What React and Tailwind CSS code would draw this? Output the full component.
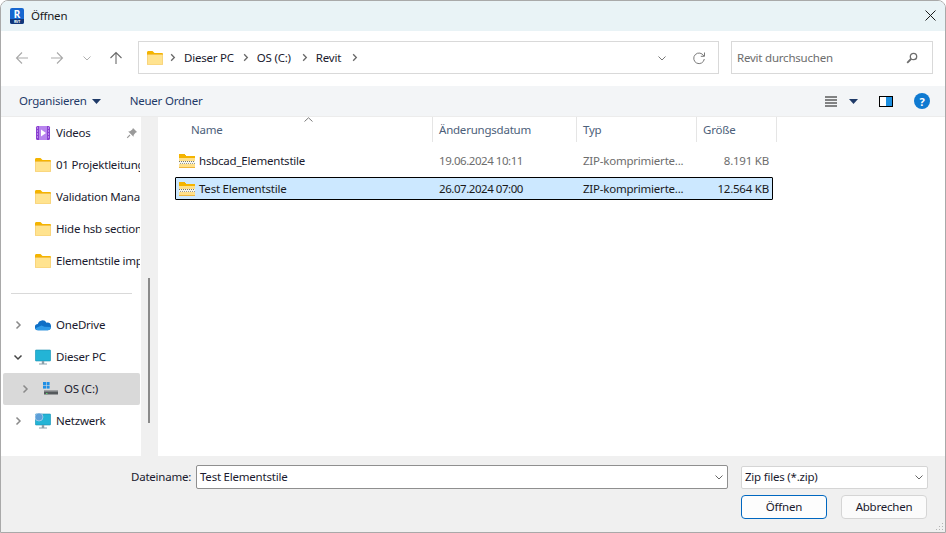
import React from "react";

const Folder = ({ className = "" }) => (
  <svg width="16" height="14" viewBox="1 1 16 14" className={`shrink-0 ${className}`}>
    <path d="M1 2.5C1 1.7 1.6 1 2.4 1H6.5L8.5 3H16a1 1 0 0 1 1 1v1H1z" fill="#f4b400" />
    <path d="M1.3 4.5h15.4V14a.8.8 0 0 1-.8.8H2.1a.8.8 0 0 1-.8-.8z" fill="#ffe38f" stroke="#f1bc45" strokeWidth="0.6" />
  </svg>
);

const ZipFolder = () => (
  <svg width="16" height="14" viewBox="1 1 16 14" className="shrink-0" shapeRendering="crispEdges">
    <path d="M1 2.5C1 1.7 1.6 1 2.4 1H6.5L8.5 3H16a1 1 0 0 1 1 1v1H1z" fill="#f4b400" />
    <path d="M1 5h16v10H1z" fill="#ffe08a" />
    <path d="M1 14.5h16" stroke="#efb63c" strokeWidth="1" />
    <rect x="1" y="8" width="16" height="3" fill="#f6f6ee" />
    <path d="M1 8.5h16" stroke="#77776c" strokeWidth="1" strokeDasharray="1 1" />
    <path d="M2 10.5h15" stroke="#9a9a8d" strokeWidth="1" strokeDasharray="1 1" />
  </svg>
);

const Chev = ({ dir = "right", color = "#8a8a8a", size = 10, w = 1.5 }) => {
  const d = {
    right: "M3.5 1.5 7 5 3.5 8.5",
    down: "M1.5 3.5 5 7 8.5 3.5",
  }[dir];
  return (
    <svg width={size} height={size} viewBox="0 0 10 10" className="shrink-0">
      <path d={d} fill="none" stroke={color} strokeWidth={w} />
    </svg>
  );
};

const Caret = () => (
  <svg width="9" height="5" viewBox="0 0 9 5" className="shrink-0">
    <path d="M0 0h9L4.5 5z" fill="#1f3a68" />
  </svg>
);

const Arrow = ({ rotate = "", color }) => (
  <svg width="14" height="14" viewBox="0 0 14 14" className={rotate}>
    <path d="M13 7H1.5M7 1.5 1.5 7 7 12.5" fill="none" stroke={color} strokeWidth="1.1" />
  </svg>
);

const Videos = () => (
  <svg width="16" height="16" viewBox="0 0 16 16" className="shrink-0">
    <rect x="1" y="1" width="14" height="14" rx="1.5" fill="#8a3fd1" />
    <rect x="4" y="1" width="8" height="14" fill="#b884ee" />
    <path d="M6 4.5 11 8l-5 3.5z" fill="#fff" />
    <path d="M2 3h1M2 6h1M2 9h1M2 12h1M13 3h1M13 6h1M13 9h1M13 12h1" stroke="#e7d4fa" strokeWidth="1" />
  </svg>
);

const Cloud = () => (
  <svg width="16" height="12" viewBox="0.7 1 16.6 12" className="shrink-0">
    <path d="M4 12.5a3.3 3.3 0 0 1-.4-6.6A5 5 0 0 1 12.7 4.6 3.4 3.4 0 0 1 14 12.5z" fill="#0f6fc6" />
    <path d="M1 10.5 7.5 7.5l3 1.2 6.6.5a3.2 3.2 0 0 1-3.1 3.3H4a3 3 0 0 1-3-2z" fill="#2f9be8" />
  </svg>
);

const Pc = ({ globe }) => (
  <svg width="16" height="16" viewBox="1 1 16 16" className="shrink-0">
    <rect x="1.3" y="2" width="15.4" height="11" rx="0.8" fill="#23b4d6" stroke="#1b8fb0" strokeWidth="0.6" />
    <rect x="7.8" y="13" width="2.4" height="3" fill="#8aa0ab" />
    <rect x="5" y="15.5" width="8" height="1" fill="#8aa0ab" />
    {globe && <circle cx="5" cy="5" r="4" fill="#5d9fd8" stroke="#c7dff2" strokeWidth="0.6" />}
  </svg>
);

const Drive = () => (
  <svg width="16" height="16" viewBox="0 0 16 16" className="shrink-0">
    <rect x="0" y="1" width="3" height="3" fill="#1f8fe5" />
    <rect x="3.6" y="1" width="3" height="3" fill="#1f8fe5" />
    <rect x="0" y="4.6" width="3" height="3" fill="#1f8fe5" />
    <rect x="3.6" y="4.6" width="3" height="3" fill="#1f8fe5" />
    <path d="M1 9.5h14v4H1z" fill="#55595c" />
    <path d="M1 9.5h14v1H1z" fill="#a6a9ab" />
    <rect x="3" y="12" width="1.5" height="1" fill="#59d66d" />
  </svg>
);

const Pin = () => (
  <svg width="12" height="12" viewBox="0 0 12 12">
    <path d="M7 1 11 5 9.5 5.7 7.7 8 7.5 9.8 2.2 4.5 4 4.3 6.3 2.5z" fill="#9a9a9a" />
    <path d="M4 8 1.2 10.8" stroke="#9a9a9a" strokeWidth="1.1" />
  </svg>
);

const NavRow = ({ icon, label, tree, selected, indent, trail }) => (
  <div className={`h-8 flex items-center shrink-0 rounded-[2px] ml-[2px] mr-px ${selected ? "bg-[#d9d9d9]" : ""}`}>
    <div className={`shrink-0 flex ${indent ? "w-[40px] pl-[17px]" : "w-[32px] pl-[10px]"}`}>{tree}</div>
    <div className="w-[21px] shrink-0 flex items-center">{icon}</div>
    <span className="flex-1 min-w-0 block whitespace-nowrap overflow-hidden leading-[16px]">{label}</span>
    {trail && <div className="mr-[2px] shrink-0">{trail}</div>}
  </div>
);

const HeadCell = ({ w, children }) => (
  <div className={`h-full shrink-0 flex items-center border-r border-[#e5e5e5] pl-[6px] ${w}`}>{children}</div>
);

const FileRow = ({ name, date, size, selected }) => (
  <div className={`h-[23px] w-[598px] flex items-center border box-border rounded-[1px] ${selected ? "bg-[#cce8ff] border-black text-[#1a1a1a]" : "border-transparent text-[#6d6d6d]"}`}>
    <div className="w-[20px] ml-[3px] shrink-0 flex"><ZipFolder /></div>
    <div className={`w-[240px] shrink-0 whitespace-nowrap ${selected ? "" : "text-[#1a1a2e]"}`}>{name}</div>
    <div className="w-[144px] shrink-0 whitespace-nowrap tracking-[-0.45px]">{date}</div>
    <div className="w-[120px] shrink-0 whitespace-nowrap">ZIP-komprimierte...</div>
    <div className="w-[66px] text-right shrink-0 whitespace-nowrap">{size}</div>
  </div>
);

export default function App() {
  return (
    <div
      className="w-[946px] h-[533px] flex flex-col overflow-hidden bg-white border border-[#a9a9a9] rounded-t-[8px] text-[11.5px] leading-none text-[#1a1a2e] tracking-[-0.22px]"
      style={{ fontFamily: '"Noto Sans", sans-serif' }}
    >
      {/* Title bar */}
      <div className="h-[30px] shrink-0 flex items-center bg-[#e9f3f6] pb-px">
        <svg width="14" height="16" viewBox="0 0 14 16" className="ml-[9px] shrink-0">
          <rect width="14" height="16" rx="2" fill="#1767d0" />
          <path d="M0 11h14v3a2 2 0 0 1-2 2H2a2 2 0 0 1-2-2z" fill="#12377a" />
          <text x="7" y="9.5" textAnchor="middle" fontSize="10" fontWeight="700" fill="#ffffff">R</text>
          <text x="7" y="15" textAnchor="middle" fontSize="3.5" fontWeight="700" fill="#ffffff">RVT</text>
        </svg>
        <span className="ml-[7px] text-[#1a1a1a]">Öffnen</span>
        <button className="ml-auto mr-[9px] w-[11px] h-[11px] flex">
          <svg width="11" height="11" viewBox="0 0 11 11">
            <path d="M.5.5 10.5 10.5M10.5.5 .5 10.5" stroke="#1a1a1a" strokeWidth="1" />
          </svg>
        </button>
      </div>

      {/* Navigation row */}
      <div className="h-[55px] shrink-0 flex items-center bg-white pb-[2px]">
        <div className="ml-[14px] w-[123px] shrink-0 flex items-center">
          <Arrow color="#a9a9a9" />
          <div className="ml-[21px] flex"><Arrow rotate="rotate-180" color="#a9a9a9" /></div>
          <div className="ml-[18px] flex"><Chev dir="down" color="#b0b0b0" w={1} /></div>
          <div className="ml-[17px] flex"><Arrow rotate="rotate-90" color="#6a6a6a" /></div>
        </div>
        <div className="w-[581px] h-[33px] shrink-0 flex items-center border border-[#d9d9d9] bg-white">
          <Folder className="ml-[8px]" />
          <div className="ml-[5px] flex"><Chev color="#6a6a6a" size={9} /></div>
          <span className="ml-[7px]">Dieser PC</span>
          <div className="ml-[7px] flex"><Chev color="#6a6a6a" size={9} /></div>
          <span className="ml-[7px]">OS (C:)</span>
          <div className="ml-[9px] flex"><Chev color="#6a6a6a" size={9} /></div>
          <span className="ml-[7px]">Revit</span>
          <div className="ml-[9px] flex"><Chev color="#6a6a6a" size={9} /></div>
          <div className="ml-auto flex"><Chev dir="down" color="#777777" w={1} /></div>
          <div className="ml-[25px] mr-[12px] flex">
            <svg width="14" height="14" viewBox="0 0 14 14">
              <path d="M11.8 5A5.3 5.3 0 1 0 12.3 8" fill="none" stroke="#7a7a7a" strokeWidth="1" />
              <path d="M12.5 1.5V5.3H8.8" fill="none" stroke="#7a7a7a" strokeWidth="1" />
            </svg>
          </div>
        </div>
        <div className="ml-[12px] w-[202px] h-[33px] shrink-0 flex items-center border border-[#d9d9d9] text-[#6d6d6d]">
          <span className="ml-[5px]">Revit durchsuchen</span>
          <svg width="12" height="12" viewBox="0 0 12 12" className="ml-auto mr-[14px]">
            <circle cx="7.5" cy="4.5" r="3.2" fill="none" stroke="#6d6d6d" strokeWidth="1.3" />
            <path d="M5 7 1.2 10.8" stroke="#6d6d6d" strokeWidth="1.8" />
          </svg>
        </div>
      </div>

      {/* Command bar */}
      <div className="h-[30px] shrink-0 flex items-center bg-[#f3f5f7] text-[#1f3a68]">
        <span className="ml-[18px]">Organisieren</span>
        <div className="ml-[5px] flex"><Caret /></div>
        <span className="ml-[29px]">Neuer Ordner</span>
        <svg width="13" height="11" viewBox="0 0 13 11" className="ml-auto">
          <path d="M0 1h12M0 4h12M0 7h12M0 10h12" stroke="#111111" strokeWidth="1" />
        </svg>
        <div className="ml-[11px] flex"><Caret /></div>
        <div className="ml-[21px] w-[14px] h-[11px] border border-black flex">
          <div className="w-1/2 bg-white" />
          <div className="w-1/2 bg-[#1c8fe0]" />
        </div>
        <div className="ml-[21px] mr-[15px] w-[16px] h-[16px] rounded-full bg-[#0f7ad1] text-white font-bold text-[11px] flex items-center justify-center">?</div>
      </div>

      {/* Body */}
      <div className="h-[340px] shrink-0 flex border-t border-[#ececec] min-h-0">
        <div className="w-[140px] shrink-0 flex flex-col">
          <NavRow icon={<Videos />} label="Videos" trail={<Pin />} />
          <NavRow icon={<Folder />} label="01 Projektleitung" />
          <NavRow icon={<Folder />} label="Validation Manager" />
          <NavRow icon={<Folder />} label="Hide hsb sections" />
          <NavRow icon={<Folder />} label="Elementstile import" />
          <div className="h-8 shrink-0 flex items-center pl-[10px] pr-[9px]">
            <div className="w-full h-px bg-[#d9d9d9]" />
          </div>
          <NavRow tree={<Chev color="#8a8a8a" />} icon={<Cloud />} label="OneDrive" />
          <NavRow tree={<Chev dir="down" color="#444444" />} icon={<Pc />} label="Dieser PC" />
          <NavRow indent selected tree={<Chev color="#8a8a8a" />} icon={<Drive />} label="OS (C:)" />
          <NavRow tree={<Chev color="#8a8a8a" />} icon={<Pc globe />} label="Netzwerk" />
        </div>
        <div className="w-[16px] shrink-0 bg-[#f0f0f0] flex justify-center">
          <div className="w-[2px] h-[145px] mt-[161px] bg-[#8a8a8a]" />
        </div>
        <div className="flex-1 min-w-0 flex flex-col border-l border-[#f0f0f0] pl-[17px]">
          <div className="h-[25px] shrink-0 flex text-[#4c607a] relative">
            <div className="w-[258px] h-full flex items-center border-r border-[#e5e5e5] pl-[16px] shrink-0">Name</div>
            <svg width="9" height="5" viewBox="0 0 9 5" className="absolute left-[129px] top-0">
              <path d="M.5 4.5 4.5.8 8.5 4.5" fill="none" stroke="#7a7a7a" strokeWidth="1" />
            </svg>
            <HeadCell w="w-[144px]">Änderungsdatum</HeadCell>
            <HeadCell w="w-[120px]">Typ</HeadCell>
            <HeadCell w="w-[80px]">Größe</HeadCell>
          </div>
          <div className="mt-[7px] flex flex-col gap-[5px]">
            <FileRow name="hsbcad_Elementstile" date="19.06.2024 10:11" size="8.191 KB" />
            <FileRow selected name="Test Elementstile" date="26.07.2024 07:00" size="12.564 KB" />
          </div>
        </div>
      </div>

      {/* Footer */}
      <div className="flex-1 min-h-0 bg-[#f0f0f0] flex flex-col relative">
        <div className="mt-[9px] flex items-center h-[24px]">
          <span className="ml-[130px] w-[65px] shrink-0 text-[#1a1a2e]">Dateiname:</span>
          <div className="w-[532px] h-[24px] shrink-0 flex items-center bg-white border border-[#8f8f8f] rounded-[2px]">
            <span className="ml-[3px]">Test Elementstile</span>
            <div className="ml-auto mr-[3px] flex"><Chev dir="down" color="#666666" w={1} /></div>
          </div>
          <div className="ml-[13px] w-[187px] h-[23px] shrink-0 flex items-center bg-white border border-[#d5d5d5] rounded-[2px]">
            <span className="ml-[3px]">Zip files (*.zip)</span>
            <div className="ml-auto mr-[3px] flex"><Chev dir="down" color="#666666" w={1} /></div>
          </div>
        </div>
        <div className="mt-[6px] flex justify-end gap-[14px] pr-[18px]">
          <button className="w-[86px] h-[24px] bg-[#fdfdfd] border border-[#0067c0] rounded-[4px] text-[#1a1a2e] flex items-center justify-center">Öffnen</button>
          <button className="w-[86px] h-[24px] bg-[#fbfbfb] border border-[#d5d5d5] rounded-[4px] text-[#1a1a2e] flex items-center justify-center">Abbrechen</button>
        </div>
        <svg width="9" height="9" viewBox="0 0 9 9" className="absolute right-[1px] bottom-[1px]">
          <path d="M7 1h1v1H7zM4 4h1v1H4zM7 4h1v1H7zM1 7h1v1H1zM4 7h1v1H4zM7 7h1v1H7z" fill="#b5b5b5" />
        </svg>
      </div>
    </div>
  );
}
